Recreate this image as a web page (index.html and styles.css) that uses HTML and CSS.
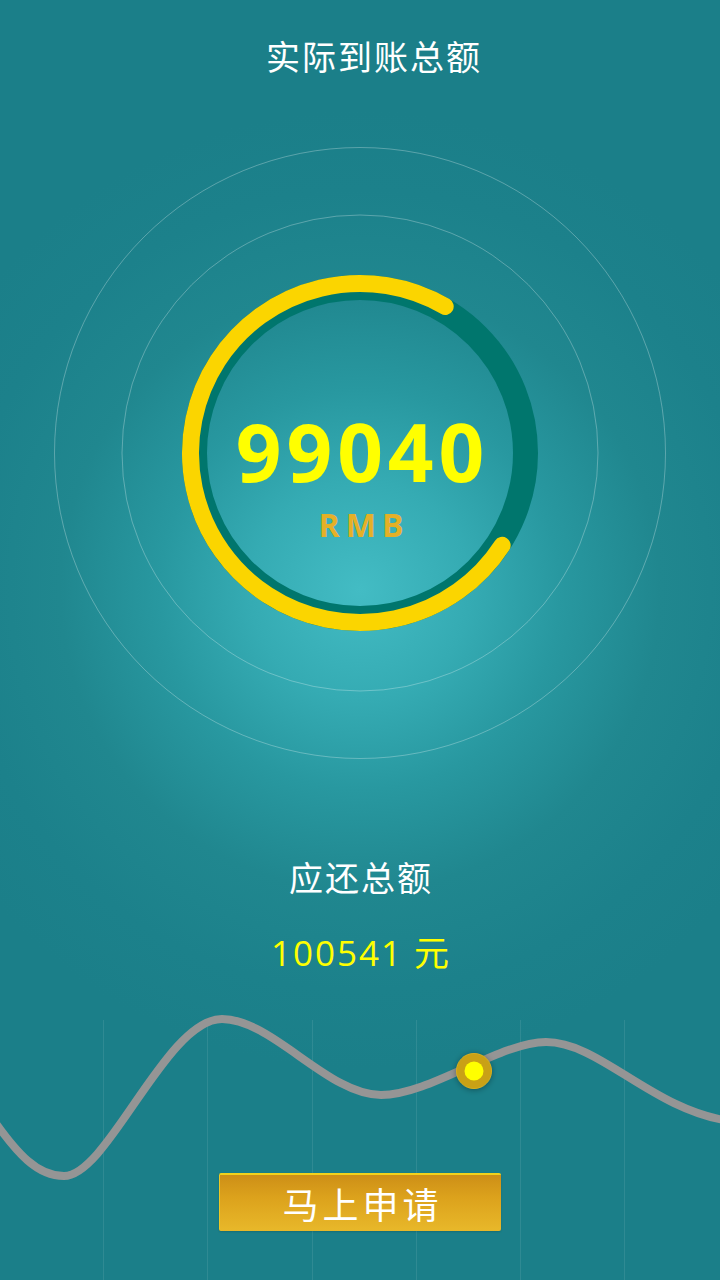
FILE: index.html
```html
<!DOCTYPE html>
<html lang="zh-CN">
<head>
<meta charset="utf-8">
<title>实际到账总额</title>
<link rel="stylesheet" href="styles.css">
</head>
<body>
<div class="screen">
  <h1 class="title">实际到账总额</h1>

  <div class="gauge">
    <svg class="gauge-svg" width="612" height="612" viewBox="0 0 612 612">
      <circle cx="306" cy="306" r="305.5" class="halo"/>
      <circle cx="306" cy="306" r="238" class="halo"/>
      <circle cx="306" cy="306" r="165.5" class="track"/>
      <circle cx="306" cy="306" r="169.5" class="progress" transform="rotate(33 306 306)"/>
    </svg>
    <div class="readout">
      <div class="amount">99040</div>
      <div class="unit">RMB</div>
    </div>
  </div>

  <div class="due-label">应还总额</div>
  <div class="due-amount">100541 元</div>

  <div class="chart">
    <svg class="chart-svg" width="720" height="280" viewBox="0 1000 720 280">
      <g class="grid">
        <line x1="103.5" y1="1020" x2="103.5" y2="1280"/>
        <line x1="207.5" y1="1020" x2="207.5" y2="1280"/>
        <line x1="312.5" y1="1020" x2="312.5" y2="1280"/>
        <line x1="416.5" y1="1020" x2="416.5" y2="1280"/>
        <line x1="520.5" y1="1020" x2="520.5" y2="1280"/>
        <line x1="624.5" y1="1020" x2="624.5" y2="1280"/>
      </g>
      <path class="curve" d="M -12 1112 C 18 1156, 38 1176, 64 1176 C 108 1176, 166 1019, 222 1019 C 272 1019, 328 1095, 381 1095 C 430 1095, 500 1042, 546 1042 C 600 1042, 652 1110, 730 1121"/>
      <defs>
        <filter id="dotShadow" x="-60%" y="-60%" width="220%" height="220%">
          <feDropShadow dx="0" dy="1" stdDeviation="3" flood-color="#000" flood-opacity="0.35"/>
        </filter>
      </defs>
      <circle cx="474" cy="1071" r="17.5" class="dot-outer" filter="url(#dotShadow)"/>
      <circle cx="474" cy="1071" r="9.5" class="dot-inner"/>
    </svg>
    <button class="apply">马上申请</button>
  </div>
</div>
</body>
</html>
```

FILE: styles.css
```css
html, body {
  margin: 0;
  padding: 0;
}

body {
  width: 720px;
  height: 1280px;
  overflow: hidden;
  font-family: "Open Sans", "Noto Sans CJK SC", sans-serif;
}

.screen {
  width: 720px;
  height: 1280px;
  background-color: #1b7f89;
  background-image: radial-gradient(circle at 360px 590px, #43bcc4 0px, #35abb3 110px, #2898a0 200px, #20878f 300px, #1c818b 400px, #1b7f89 480px);
  color: #fff;
  display: flex;
  flex-direction: column;
}

.title {
  margin: 0;
  padding: 32px 0 0 28px;
  font-family: "Noto Sans CJK SC", sans-serif;
  font-weight: 400;
  font-size: 34px;
  line-height: 48px;
  letter-spacing: 2px;
  text-align: center;
}

.gauge {
  margin: 67px auto 0;
  width: 612px;
  height: 612px;
  display: grid;
}

.gauge-svg,
.readout {
  grid-area: 1 / 1;
}

.halo {
  fill: none;
  stroke: rgba(255, 255, 255, 0.28);
  stroke-width: 1;
}

.track {
  fill: none;
  stroke: #00766d;
  stroke-width: 25;
}

.progress {
  fill: none;
  stroke: #fbd500;
  stroke-width: 17;
  stroke-linecap: round;
  stroke-dasharray: 790 400;
}

.readout {
  align-self: start;
  padding-top: 264px;
  display: flex;
  flex-direction: column;
  align-items: center;
}

.amount {
  font-family: "Open Sans", sans-serif;
  font-weight: 700;
  font-size: 80px;
  line-height: 80px;
  letter-spacing: 5px;
  padding-left: 5px;
  color: #ffff00;
}

.unit {
  margin-top: 18px;
  font-family: "Open Sans", sans-serif;
  font-weight: 700;
  font-size: 32px;
  line-height: 32px;
  letter-spacing: 6px;
  padding-left: 8px;
  color: #e5b027;
}

.due-label {
  margin-top: 94px;
  font-family: "Noto Sans CJK SC", sans-serif;
  font-size: 34px;
  line-height: 48px;
  letter-spacing: 2px;
  padding-left: 2px;
  text-align: center;
}

.due-amount {
  margin-top: 28px;
  padding-left: 2px;
  font-family: "Open Sans", "Noto Sans CJK SC", sans-serif;
  font-size: 35px;
  line-height: 48px;
  letter-spacing: 2px;
  text-align: center;
  color: #ffff00;
}

.chart {
  margin-top: auto;
  height: 280px;
  display: grid;
}

.chart-svg,
.apply {
  grid-area: 1 / 1;
}

.grid line {
  stroke: rgba(255, 255, 255, 0.09);
  stroke-width: 1;
}

.curve {
  fill: none;
  stroke: #959595;
  stroke-width: 8;
}

.dot-outer {
  fill: #c9a116;
  stroke: #d8ad1c;
  stroke-width: 1;
}

.dot-inner {
  fill: #ffff00;
}

.apply {
  align-self: start;
  justify-self: center;
  margin-top: 173px;
  width: 282px;
  height: 58px;
  padding: 0 0 0 4px;
  border: none;
  border-top: 2px solid #f2d21c;
  border-left: 1px solid #ecc826;
  border-radius: 2px;
  background: linear-gradient(#cd8f17, #dca21c 40%, #e8b82a);
  box-shadow: 0 1px 2px rgba(0, 0, 0, 0.15);
  color: #fff;
  font-family: "Noto Sans CJK SC", sans-serif;
  font-size: 36px;
  line-height: 54px;
  letter-spacing: 4px;
}
```
